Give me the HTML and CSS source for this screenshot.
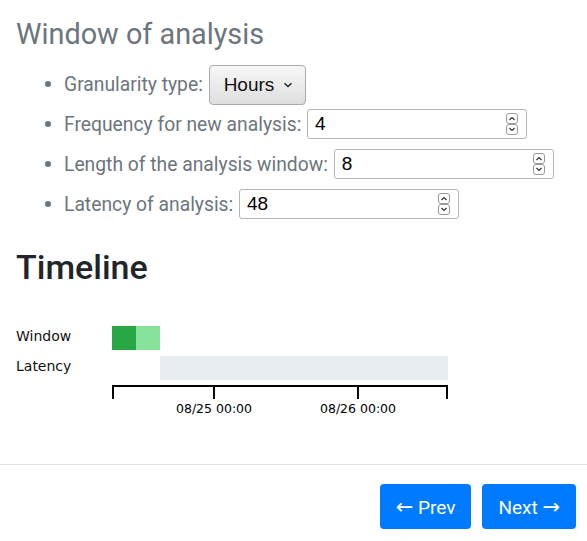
FILE: index.html
```html
<!DOCTYPE html>
<html>
<head>
<meta charset="utf-8">
<link rel="stylesheet" href="styles.css">
</head>
<body>
<div class="content">
  <h3 class="section-title">Window of analysis</h3>
  <ul class="params">
    <li class="param">
      <span class="label">Granularity type:</span>
      <div class="select">
        <span>Hours</span>
        <svg class="chev" width="10" height="6" viewBox="0 0 10 6"><path d="M1.5 1.2 L5 4.6 L8.5 1.2" fill="none" stroke="#222" stroke-width="1.4"/></svg>
      </div>
    </li>
    <li class="param">
      <span class="label">Frequency for new analysis:</span>
      <div class="num"><span>4</span>
        <div class="spin">
          <div class="sbtn"><svg width="8" height="5" viewBox="0 0 8 5"><path d="M1.5 4 L4 1.5 L6.5 4" fill="none" stroke="#333" stroke-width="1.2"/></svg></div>
          <div class="sbtn"><svg width="8" height="5" viewBox="0 0 8 5"><path d="M1.5 1 L4 3.5 L6.5 1" fill="none" stroke="#333" stroke-width="1.2"/></svg></div>
        </div>
      </div>
    </li>
    <li class="param">
      <span class="label">Length of the analysis window:</span>
      <div class="num"><span>8</span>
        <div class="spin">
          <div class="sbtn"><svg width="8" height="5" viewBox="0 0 8 5"><path d="M1.5 4 L4 1.5 L6.5 4" fill="none" stroke="#333" stroke-width="1.2"/></svg></div>
          <div class="sbtn"><svg width="8" height="5" viewBox="0 0 8 5"><path d="M1.5 1 L4 3.5 L6.5 1" fill="none" stroke="#333" stroke-width="1.2"/></svg></div>
        </div>
      </div>
    </li>
    <li class="param">
      <span class="label">Latency of analysis:</span>
      <div class="num"><span>48</span>
        <div class="spin">
          <div class="sbtn"><svg width="8" height="5" viewBox="0 0 8 5"><path d="M1.5 4 L4 1.5 L6.5 4" fill="none" stroke="#333" stroke-width="1.2"/></svg></div>
          <div class="sbtn"><svg width="8" height="5" viewBox="0 0 8 5"><path d="M1.5 1 L4 3.5 L6.5 1" fill="none" stroke="#333" stroke-width="1.2"/></svg></div>
        </div>
      </div>
    </li>
  </ul>
  <h2 class="timeline-title">Timeline</h2>
  <svg class="chart" width="460" height="110" viewBox="0 0 460 110">
    <text x="0" y="25" class="row-label">Window</text>
    <text x="0" y="55" class="row-label">Latency</text>
    <rect x="96" y="10" width="24" height="24" fill="#28a745"/>
    <rect x="120" y="10" width="24" height="24" fill="#86e29b"/>
    <rect x="144" y="40" width="288" height="24" fill="#e9ecef"/>
    <path d="M97 83 V70 H431 V83 M198 70 V83 M342 70 V83" fill="none" stroke="#000" stroke-width="2"/>
    <text x="198" y="97" class="tick" text-anchor="middle">08/25 00:00</text>
    <text x="342" y="97" class="tick" text-anchor="middle">08/26 00:00</text>
  </svg>
</div>
<div class="footer">
  <button class="btn"><span class="arrow">←</span> Prev</button>
  <button class="btn">Next <span class="arrow">→</span></button>
</div>
</body>
</html>
```

FILE: styles.css
```css
html, body {
  margin: 0;
  padding: 0;
  background: #fff;
}
body {
  font-family: Roboto, "Liberation Sans", sans-serif;
  color: #212529;
}
.content {
  padding: 0 16px;
}
.section-title {
  margin: 0;
  padding-top: 17px;
  font-size: 28.8px;
  font-weight: 400;
  line-height: 35px;
  color: #6c757d;
}
.params {
  margin: 12px 0 0 0;
  padding-left: 48px;
  color: #6c757d;
  font-size: 19.3px;
}
.param {
  height: 40px;
  line-height: 40px;
}
.param > * {
  vertical-align: middle;
}
.label {
  display: inline-block;
  line-height: 22px;
}
.select {
  display: inline-flex;
  align-items: center;
  gap: 9px;
  height: 40px;
  box-sizing: border-box;
  padding: 0 12px 0 14px;
  margin-left: 1px;
  border: 1px solid #aaa;
  border-radius: 4px;
  background: linear-gradient(#f7f7f7, #dedede);
  font-family: "Liberation Sans", Arial, sans-serif;
  font-size: 19px;
  color: #111;
  line-height: 22px;
}
.num {
  display: inline-flex;
  align-items: center;
  justify-content: space-between;
  width: 220px;
  height: 30px;
  box-sizing: border-box;
  margin-left: 1px;
  margin-top: -2px;
  padding: 0 8px 0 7px;
  border: 1px solid #b5b5b5;
  border-radius: 3px;
  background: #fff;
  font-family: "Liberation Sans", Arial, sans-serif;
  font-size: 19px;
  color: #000;
  line-height: 22px;
}
.spin {
  display: flex;
  flex-direction: column;
}
.sbtn {
  width: 12px;
  height: 11px;
  box-sizing: border-box;
  border: 1px solid #999;
  border-radius: 3px;
  display: flex;
  align-items: center;
  justify-content: center;
  background: #fff;
}
.timeline-title {
  margin: 23px 0 0 0;
  font-size: 34px;
  font-weight: 500;
  line-height: 40px;
  color: #212529;
}
.chart {
  display: block;
  margin-top: 29px;
}
.row-label {
  font-family: "DejaVu Sans", sans-serif;
  font-size: 14px;
  fill: #111;
}
.tick {
  font-family: "DejaVu Sans", sans-serif;
  font-size: 12.5px;
  fill: #000;
}
.footer {
  margin-top: 38px;
  border-top: 1px solid #dee2e6;
  display: flex;
  justify-content: flex-end;
  gap: 11px;
  padding: 19px 11px 0 0;
}
.btn {
  height: 45px;
  padding: 0 16px;
  border: none;
  border-radius: 4px;
  background: #007bff;
  color: #fff;
  font-family: Roboto, "Liberation Sans", sans-serif;
  font-size: 19px;
}
.arrow {
  font-family: "DejaVu Sans", sans-serif;
  font-size: 21px;
}
```
